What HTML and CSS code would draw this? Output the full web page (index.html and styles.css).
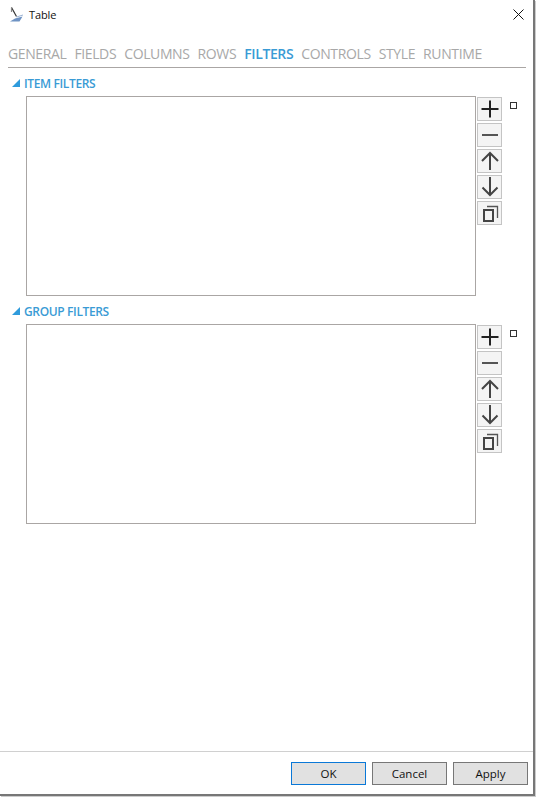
FILE: index.html
```html
<!DOCTYPE html>
<html lang="en">
<head>
<meta charset="UTF-8">
<meta name="viewport" content="width=device-width, initial-scale=1.0">
<title>Table</title>
<link rel="stylesheet" href="styles.css">
</head>
<body>

<div class="window">
  <div class="titlebar">
    <svg class="app-icon" width="16" height="16" viewBox="0 0 16 16">
      <path d="M2.5 0.5 L7.5 9.5" stroke="#333" stroke-width="1.2" fill="none"/>
      <path d="M2.5 0.5 L2.5 5" stroke="#888" stroke-width="1.2" fill="none"/>
      <path d="M7.5 10 L14 8" stroke="#9db4d4" stroke-width="1" fill="none"/>
      <path d="M1 14.5 L6 11.5 L13.5 9.5 L10.5 14.5 Z" fill="#6f93c4"/>
    </svg>
    <span class="title">Table</span>
    <svg class="close" width="11" height="11" viewBox="0 0 11 11">
      <path d="M0.5 0.5 L10.5 10.5 M10.5 0.5 L0.5 10.5" stroke="#111" stroke-width="1" fill="none"/>
    </svg>
  </div>

  <div class="tabs">
    <span class="tab">GENERAL</span>
    <span class="tab">FIELDS</span>
    <span class="tab">COLUMNS</span>
    <span class="tab">ROWS</span>
    <span class="tab active">FILTERS</span>
    <span class="tab">CONTROLS</span>
    <span class="tab">STYLE</span>
    <span class="tab">RUNTIME</span>
  </div>

  <div class="content">
    <section class="group">
      <h3 class="group-head"><span class="arrow"></span>ITEM FILTERS</h3>
      <div class="group-body">
        <div class="listbox"></div>
        <div class="tools">
          <button class="tool"><svg width="22" height="22" viewBox="0 0 22 22"><path d="M11 2.5 V19.5 M2.5 11 H19.5" stroke="#222" stroke-width="2" fill="none"/></svg></button>
          <button class="tool"><svg width="22" height="22" viewBox="0 0 22 22"><path d="M3 11 H19" stroke="#555" stroke-width="2" fill="none"/></svg></button>
          <button class="tool"><svg width="22" height="22" viewBox="0 0 22 22"><path d="M11 3 V20 M3 11 L11 3 L19 11" stroke="#444" stroke-width="2" fill="none"/></svg></button>
          <button class="tool"><svg width="22" height="22" viewBox="0 0 22 22"><path d="M11 1 V19 M3.5 11.5 L11 19 L18.5 11.5" stroke="#444" stroke-width="2" fill="none"/></svg></button>
          <button class="tool"><svg width="22" height="22" viewBox="0 0 22 22"><rect x="5" y="8" width="9" height="11" stroke="#444" stroke-width="2" fill="none"/><path d="M8 4.5 H18.5 V16" stroke="#555" stroke-width="1.3" fill="none"/></svg></button>
        </div>
        <span class="marker"></span>
      </div>
    </section>

    <section class="group">
      <h3 class="group-head"><span class="arrow"></span>GROUP FILTERS</h3>
      <div class="group-body">
        <div class="listbox"></div>
        <div class="tools">
          <button class="tool"><svg width="22" height="22" viewBox="0 0 22 22"><path d="M11 2.5 V19.5 M2.5 11 H19.5" stroke="#222" stroke-width="2" fill="none"/></svg></button>
          <button class="tool"><svg width="22" height="22" viewBox="0 0 22 22"><path d="M3 11 H19" stroke="#555" stroke-width="2" fill="none"/></svg></button>
          <button class="tool"><svg width="22" height="22" viewBox="0 0 22 22"><path d="M11 3 V20 M3 11 L11 3 L19 11" stroke="#444" stroke-width="2" fill="none"/></svg></button>
          <button class="tool"><svg width="22" height="22" viewBox="0 0 22 22"><path d="M11 1 V19 M3.5 11.5 L11 19 L18.5 11.5" stroke="#444" stroke-width="2" fill="none"/></svg></button>
          <button class="tool"><svg width="22" height="22" viewBox="0 0 22 22"><rect x="5" y="8" width="9" height="11" stroke="#444" stroke-width="2" fill="none"/><path d="M8 4.5 H18.5 V16" stroke="#555" stroke-width="1.3" fill="none"/></svg></button>
        </div>
        <span class="marker"></span>
      </div>
    </section>
  </div>

  <div class="footer">
    <button class="btn default">OK</button>
    <button class="btn">Cancel</button>
    <button class="btn">Apply</button>
  </div>
</div>

</body>
</html>
```

FILE: styles.css
```css
html, body {
  margin: 0;
  height: 100%;
  background: #fff;
}

body {
  font-family: "Open Sans", "Noto Sans", Arial, sans-serif;
  color: #111;
}

.window {
  width: 535px;
  height: 796px;
  box-sizing: border-box;
  border-right: 2px solid #777;
  border-bottom: 2px solid #777;
  box-shadow: 1px 1px 0 #ccc;
  background: #fff;
  display: flex;
  flex-direction: column;
}

.titlebar {
  display: flex;
  align-items: center;
  height: 29px;
  padding: 0 9px 0 9px;
  flex: none;
}

.app-icon {
  flex: none;
}

.title {
  margin-left: 4px;
  font-size: 11px;
  letter-spacing: -0.1px;
}

.close {
  margin-left: auto;
}

.tabs {
  display: flex;
  gap: 8px;
  margin: 15px 7px 0 8px;
  height: 23px;
  border-bottom: 1px solid #aaa6a4;
  font-size: 14px;
  line-height: 20px;
  letter-spacing: -0.38px;
  color: #a8a8a8;
}

.tab.active {
  color: #3a9bd5;
  font-weight: 600;
}

.content {
  flex: 1;
  padding-top: 6px;
}

.group {
  margin-bottom: 6px;
}

.group-head {
  display: flex;
  align-items: center;
  margin: 0;
  height: 18px;
  padding-left: 12px;
  font-size: 12px;
  font-weight: 600;
  letter-spacing: -0.36px;
  color: #3a9bd5;
}

.arrow {
  width: 0;
  height: 0;
  margin-right: 4px;
  border-left: 8px solid transparent;
  border-bottom: 8px solid #2f9bdc;
}

.group-body {
  display: flex;
  align-items: flex-start;
  margin: 4px 0 0 26px;
}

.listbox {
  width: 450px;
  height: 200px;
  box-sizing: border-box;
  border: 1px solid #aaa6a4;
  background: #fff;
}

.tools {
  display: flex;
  flex-direction: column;
  gap: 2px;
  margin: 1px 0 0 1px;
}

.tool {
  display: flex;
  align-items: center;
  justify-content: center;
  width: 25px;
  height: 24px;
  padding: 0;
  box-sizing: border-box;
  border: 1px solid #c4c4c4;
  background: #f4f4f4;
}

.marker {
  width: 7px;
  height: 7px;
  box-sizing: border-box;
  margin: 6px 0 0 8px;
  border: 1px solid #333;
  background: #fff;
}

.footer {
  display: flex;
  justify-content: flex-end;
  gap: 6px;
  flex: none;
  height: 43px;
  box-sizing: border-box;
  padding: 10px 5px 0 0;
  border-top: 1px solid #d0d0d0;
}

.btn {
  width: 75px;
  height: 23px;
  padding: 0;
  box-sizing: border-box;
  border: 1px solid #777;
  background: #e1e1e1;
  font-family: inherit;
  font-size: 11.5px;
  color: #111;
}

.btn.default {
  border-color: #0a78d7;
}
```
